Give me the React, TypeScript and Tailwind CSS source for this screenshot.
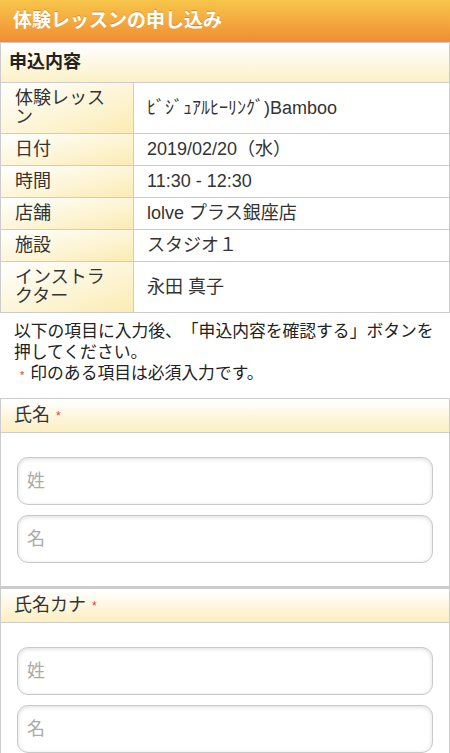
import React from 'react'

const font = { fontFamily: '"Liberation Sans", "Noto Sans CJK JP", sans-serif' }

const rows: { label: string; value: string }[] = [
  { label: '体験レッスン', value: 'ﾋﾞｼﾞｭｱﾙﾋｰﾘﾝｸﾞ)Bamboo' },
  { label: '日付', value: '2019/02/20（水）' },
  { label: '時間', value: '11:30 - 12:30' },
  { label: '店舗', value: 'lolve プラス銀座店' },
  { label: '施設', value: 'スタジオ１' },
  { label: 'インストラクター', value: '永田 真子' },
]

function FieldSection({ title, last }: { title: string; last?: boolean }) {
  return (
    <div className={'border-x border-[#cccccc] ' + (last ? '' : 'border-b-2 border-b-[#cccccc]')}>
      <div className="flex h-[35px] items-center border-y border-[#cccccc] bg-gradient-to-b from-white to-[#fcefc0] pl-[13px] text-[18px] text-[#333]">
        {title}
        <span className="ml-[6px] text-[12px] text-[#e83a3a]">*</span>
      </div>
      <div className="flex flex-col gap-[10px] px-[16px] pt-[24px] pb-[23px]">
        {['姓', '名'].map((p) => (
          <input
            key={p}
            placeholder={p}
            className="h-[48px] w-full rounded-[11px] border border-[#c8c8c8] bg-white px-[9px] text-[18px] text-[#333] shadow-[inset_0_1px_4px_rgba(0,0,0,0.14)] outline-none placeholder:text-[#aaaaaa]"
            style={font}
          />
        ))}
      </div>
    </div>
  )
}

export default function App() {
  return (
    <div className="min-h-[753px] w-[450px] bg-white text-[#333] [text-spacing-trim:space-all]" style={font}>
      <div className="flex h-[43px] items-center border-b border-[#cccccc] bg-gradient-to-b from-[#f7c64b] to-[#ef8d33] pl-[13px]">
        <h1 className="text-[19px] font-bold text-white [text-shadow:0_-1px_0_rgba(150,80,0,0.35)]">
          体験レッスンの申し込み
        </h1>
      </div>

      <div className="border-x border-b border-[#cccccc]">
        <div className="flex h-[40px] items-center border-b border-[#cccccc] bg-gradient-to-b from-white to-[#fcf1c6] pl-[8px] text-[18px] font-bold text-[#222]">
          申込内容
        </div>
        {rows.map((r, i) => (
          <div
            key={r.label}
            className={'grid grid-cols-[133px_1fr] ' + (i < rows.length - 1 ? 'border-b border-[#cccccc]' : '')}
          >
            <div className="border-r border-[#cccccc] bg-gradient-to-br from-white to-[#fbecb3] py-[6px] pl-[14px] pr-[12px] text-[18px] leading-[19px] text-[#333]">
              {r.label}
            </div>
            <div className="flex items-center pl-[13px] text-[18px] leading-[19px] text-[#333]">{r.value}</div>
          </div>
        ))}
      </div>

      <div className="px-[14px] pt-[8px] pb-[12px] text-[16.8px] leading-[21px] text-[#222]">
        <p>
          以下の項目に入力後、「申込内容を確認する」ボタンを
          <br />
          押してください。
        </p>
        <p>
          <span className="mx-[6px] text-[11px] leading-[21px] text-[#e83a3a]">*</span>印のある項目は必須入力です。
        </p>
      </div>

      <FieldSection title="氏名" />
      <FieldSection title="氏名カナ" last />
    </div>
  )
}
